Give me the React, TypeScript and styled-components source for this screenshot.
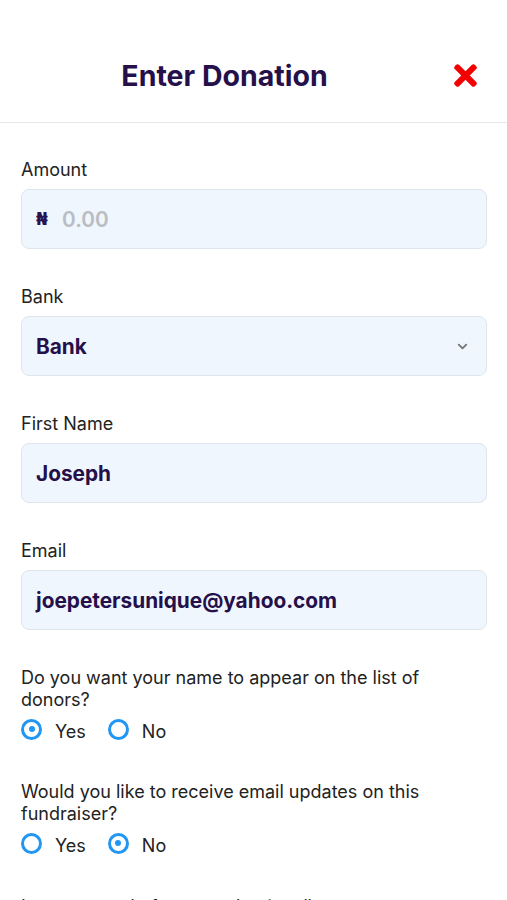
import React, { useState } from "react";
import styled, { createGlobalStyle, css } from "styled-components";
import { FaTimes } from "react-icons/fa";
import { ChevronDown } from "lucide-react";

const GlobalStyle = createGlobalStyle`
  * { box-sizing: border-box; }
  body {
    margin: 0;
    background: #ffffff;
    font-family: Inter, "Noto Sans", "DejaVu Sans", sans-serif;
    color: #1f1f1f;
  }
`;

const Page = styled.div`
  width: 507px;
  height: 900px;
  overflow: hidden;
  background: #fff;
`;

const Header = styled.header`
  height: 123px;
  padding-top: 28px;
  border-bottom: 1px solid #e6e6e8;
  display: flex;
  align-items: center;
`;

const Title = styled.h1`
  flex: 1;
  margin: 0;
  text-align: center;
  font-size: 28.5px;
  font-weight: 700;
  color: #25104a;
`;

const CloseButton = styled.button`
  width: 58px;
  border: 0;
  background: none;
  padding: 0;
  color: #f40000;
  display: flex;
  cursor: pointer;
`;

const Form = styled.form`
  display: flex;
  flex-direction: column;
  gap: 37px;
  padding: 36px 20px 0 21px;
`;

const Field = styled.div`
  display: flex;
  flex-direction: column;
  gap: 8px;
`;

const Label = styled.label`
  font-size: 18px;
  line-height: 22px;
  color: #222;
`;

const Box = styled.div`
  height: 60px;
  border-radius: 8px;
  background: #eff6fe;
  border: 1px solid #dfe5ec;
  display: flex;
  align-items: center;
  padding: 0 14px;
  gap: 10px;
`;

const Currency = styled.span`
  font-size: 17px;
  font-weight: 700;
  color: #2a1450;
  font-family: "DejaVu Sans", sans-serif;
  width: 16px;
`;

const Value = styled.span<{ placeholder?: boolean }>`
  flex: 1;
  font-size: 20.8px;
  font-weight: 700;
  color: #25104a;
  ${(p) =>
    p.placeholder &&
    css`
      color: #b9bdc4;
      font-weight: 600;
    `}
`;

const Caret = styled(ChevronDown)`
  color: #777;
  margin-right: 2px;
`;

const Question = styled.div`
  display: flex;
  flex-direction: column;
`;

const QuestionText = styled.p<{ clipped?: boolean }>`
  margin: ${(p) => (p.clipped ? "1px 0 0" : "0")};
  font-size: 18px;
  line-height: 22px;
  color: #222;
`;

const Options = styled.div`
  display: flex;
  gap: 22px;
  height: 26px;
  margin-top: 7px;
  align-items: center;
`;

const Option = styled.label`
  display: flex;
  align-items: center;
  gap: 13px;
  font-size: 18px;
  color: #222;
  cursor: pointer;
`;

const Radio = styled.span<{ checked: boolean }>`
  width: 21px;
  height: 21px;
  border-radius: 50%;
  border: 3.5px solid #2196f3;
  display: flex;
  align-items: center;
  justify-content: center;
  margin-top: -4px;

  &::after {
    content: "";
    width: 6px;
    height: 6px;
    border-radius: 50%;
    background: ${(p) => (p.checked ? "#2196f3" : "transparent")};
  }
`;

interface YesNoProps {
  text: string;
  value: boolean;
  onChange: (v: boolean) => void;
}

const YesNo = ({ text, value, onChange }: YesNoProps) => (
  <Question>
    <QuestionText>{text}</QuestionText>
    <Options>
      <Option onClick={() => onChange(true)}>
        <Radio checked={value} />
        Yes
      </Option>
      <Option onClick={() => onChange(false)}>
        <Radio checked={!value} />
        No
      </Option>
    </Options>
  </Question>
);

export default function App() {
  const [showName, setShowName] = useState(true);
  const [updates, setUpdates] = useState(false);

  return (
    <Page>
      <GlobalStyle />
      <Header>
        <Title>Enter Donation</Title>
        <CloseButton type="button" aria-label="Close">
          <FaTimes size={33} />
        </CloseButton>
      </Header>
      <Form>
        <Field>
          <Label>Amount</Label>
          <Box>
            <Currency>₦</Currency>
            <Value placeholder>0.00</Value>
          </Box>
        </Field>
        <Field>
          <Label>Bank</Label>
          <Box>
            <Value>Bank</Value>
            <Caret size={15} strokeWidth={3} />
          </Box>
        </Field>
        <Field>
          <Label>First Name</Label>
          <Box>
            <Value>Joseph</Value>
          </Box>
        </Field>
        <Field>
          <Label>Email</Label>
          <Box>
            <Value>joepetersunique@yahoo.com</Value>
          </Box>
        </Field>
        <YesNo
          text="Do you want your name to appear on the list of donors?"
          value={showName}
          onChange={setShowName}
        />
        <YesNo
          text="Would you like to receive email updates on this fundraiser?"
          value={updates}
          onChange={setUpdates}
        />
        <QuestionText clipped>Leave a word of support (optional)</QuestionText>
      </Form>
    </Page>
  );
}
